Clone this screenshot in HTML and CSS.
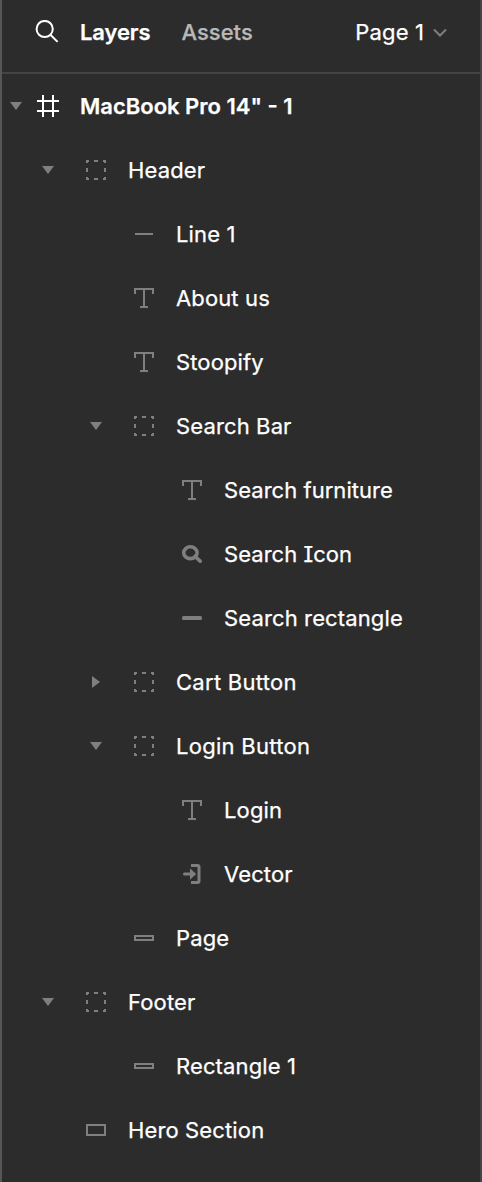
FILE: index.html
```html
<!DOCTYPE html>
<html lang="en">
<head>
<meta charset="utf-8">
<title>Layers</title>
<link rel="stylesheet" href="styles.css">
</head>
<body>
<svg class="sprite" aria-hidden="true">
  <symbol id="down" viewBox="0 0 32 32"><path d="M10 12H22L16 20Z" fill="currentColor"/></symbol>
  <symbol id="right" viewBox="0 0 32 32"><path d="M12 10V22L20 16Z" fill="currentColor"/></symbol>
  <symbol id="frame" viewBox="0 0 32 32"><path d="M5 11H27M5 21H27M11 5V27M21 5V27" stroke="currentColor" stroke-width="2"/></symbol>
  <symbol id="group" viewBox="0 0 32 32"><path d="M6 6h3v2h-1v1h-2zM14 6h4v2h-4zM23 6h3v3h-2v-1h-1zM6 14h2v4h-2zM24 14h2v4h-2zM6 23h2v1h1v2h-3zM14 24h4v2h-4zM24 23h2v3h-3v-2h1z" fill="currentColor"/></symbol>
  <symbol id="line" viewBox="0 0 32 32"><path d="M7 16H25" stroke="currentColor" stroke-width="2"/></symbol>
  <symbol id="text" viewBox="0 0 32 32"><path d="M7 12V7H25V12M16 7V25M12 25H20" fill="none" stroke="currentColor" stroke-width="2"/></symbol>
  <symbol id="lens" viewBox="0 0 32 32"><ellipse cx="14.4" cy="14.7" rx="6.7" ry="5.9" fill="none" stroke="currentColor" stroke-width="3.6"/><path d="M19 18.5L24.2 23.2" stroke="currentColor" stroke-width="3.6" stroke-linecap="round"/></symbol>
  <symbol id="bar" viewBox="0 0 32 32"><rect x="6" y="14" width="20" height="4" rx="1.5" fill="currentColor"/></symbol>
  <symbol id="enter" viewBox="0 0 32 32"><path d="M15 7.5H21.5Q23 7.5 23 9V23Q23 24.5 21.5 24.5H15" fill="none" stroke="currentColor" stroke-width="3"/><path d="M8.5 16H18" stroke="currentColor" stroke-width="3" stroke-linecap="round"/><path d="M14 10.3L20 16L14 21.7Z" fill="currentColor"/></symbol>
  <symbol id="thin" viewBox="0 0 32 32"><rect x="7" y="14" width="18" height="4" fill="none" stroke="currentColor" stroke-width="2"/></symbol>
  <symbol id="rect" viewBox="0 0 32 32"><rect x="7" y="11" width="18" height="10" fill="none" stroke="currentColor" stroke-width="2"/></symbol>
</svg>
<div class="panel">
  <header class="tabs">
    <svg class="search" viewBox="0 0 24 24"><circle cx="9.7" cy="9" r="8.1"/><path d="M15.4 14.7L22.6 21.9"/></svg>
    <span class="tab active">Layers</span>
    <span class="tab">Assets</span>
    <span class="page">Page 1</span>
    <svg class="chevron" viewBox="0 0 16 10"><path d="M2 2.5L8 8.5L14 2.5"/></svg>
  </header>
  <ul class="tree">
    <li class="row root"><svg class="toggle"><use href="#down"/></svg><svg class="icon"><use href="#frame"/></svg><span class="name">MacBook Pro 14" - 1</span></li>
    <li class="row d1"><svg class="toggle"><use href="#down"/></svg><svg class="icon"><use href="#group"/></svg><span class="name">Header</span></li>
    <li class="row d2"><svg class="toggle"></svg><svg class="icon"><use href="#line"/></svg><span class="name">Line 1</span></li>
    <li class="row d2"><svg class="toggle"></svg><svg class="icon"><use href="#text"/></svg><span class="name">About us</span></li>
    <li class="row d2"><svg class="toggle"></svg><svg class="icon"><use href="#text"/></svg><span class="name">Stoopify</span></li>
    <li class="row d2"><svg class="toggle"><use href="#down"/></svg><svg class="icon"><use href="#group"/></svg><span class="name">Search Bar</span></li>
    <li class="row d3"><svg class="toggle"></svg><svg class="icon"><use href="#text"/></svg><span class="name tight">Search furniture</span></li>
    <li class="row d3"><svg class="toggle"></svg><svg class="icon"><use href="#lens"/></svg><span class="name tight serif-i">Search Icon</span></li>
    <li class="row d3"><svg class="toggle"></svg><svg class="icon"><use href="#bar"/></svg><span class="name">Search rectangle</span></li>
    <li class="row d2"><svg class="toggle"><use href="#right"/></svg><svg class="icon"><use href="#group"/></svg><span class="name wide">Cart Button</span></li>
    <li class="row d2"><svg class="toggle"><use href="#down"/></svg><svg class="icon"><use href="#group"/></svg><span class="name wide">Login Button</span></li>
    <li class="row d3"><svg class="toggle"></svg><svg class="icon"><use href="#text"/></svg><span class="name">Login</span></li>
    <li class="row d3"><svg class="toggle"></svg><svg class="icon"><use href="#enter"/></svg><span class="name">Vector</span></li>
    <li class="row d2"><svg class="toggle"></svg><svg class="icon"><use href="#thin"/></svg><span class="name">Page</span></li>
    <li class="row d1"><svg class="toggle"><use href="#down"/></svg><svg class="icon"><use href="#group"/></svg><span class="name">Footer</span></li>
    <li class="row d2"><svg class="toggle"></svg><svg class="icon"><use href="#thin"/></svg><span class="name">Rectangle 1</span></li>
    <li class="row d1"><svg class="toggle"></svg><svg class="icon"><use href="#rect"/></svg><span class="name">Hero Section</span></li>
  </ul>
</div>
</body>
</html>
```
FILE: styles.css
```css
* { box-sizing: border-box; }
body {
  margin: 0;
  background: #2c2c2c;
  color: #fff;
  font: 400 22px/32px Inter, sans-serif;
  letter-spacing: 0.13px;
  -webkit-text-stroke: 0.25px currentColor;
}
.sprite { display: none; }
.panel {
  height: 1182px;
  border-left: 2px solid #565656;
  border-right: 2px solid #444;
}
.tabs {
  display: flex;
  align-items: center;
  height: 74px;
  padding: 0 32px 8px 33px;
  border-bottom: 2px solid #444;
}
.search { width: 24px; height: 24px; margin: 0 21px 0 0; fill: none; stroke: #fff; stroke-width: 2; }
.tab { margin-right: 31px; font-weight: 500; letter-spacing: 0; color: #b8b8b8; }
.tab.active { font-weight: 600; letter-spacing: -0.1px; color: #fff; }
.page { margin-left: auto; }
.chevron { width: 16px; height: 10px; margin-left: 8px; fill: none; stroke: #7f7f7f; stroke-width: 2; }
.tree { margin: 0; padding: 0; list-style: none; }
.row { display: flex; align-items: center; height: 64px; margin-left: -2px; }
.toggle, .icon { width: 32px; height: 32px; flex: none; color: #7f7f7f; }
.toggle { margin-right: 16px; }
.icon { margin-right: 16px; }
.root .toggle { margin-right: 0; }
.root .icon { color: #fff; }
.root .name { font-weight: 600; letter-spacing: 0; }
.d1 { padding-left: 32px; }
.d2 { padding-left: 80px; }
.d3 { padding-left: 128px; }
.name { white-space: nowrap; }
.tight { letter-spacing: 0.04px; }
.wide { letter-spacing: 0.28px; }
.serif-i { font-feature-settings: "cv08" 1; }
```
